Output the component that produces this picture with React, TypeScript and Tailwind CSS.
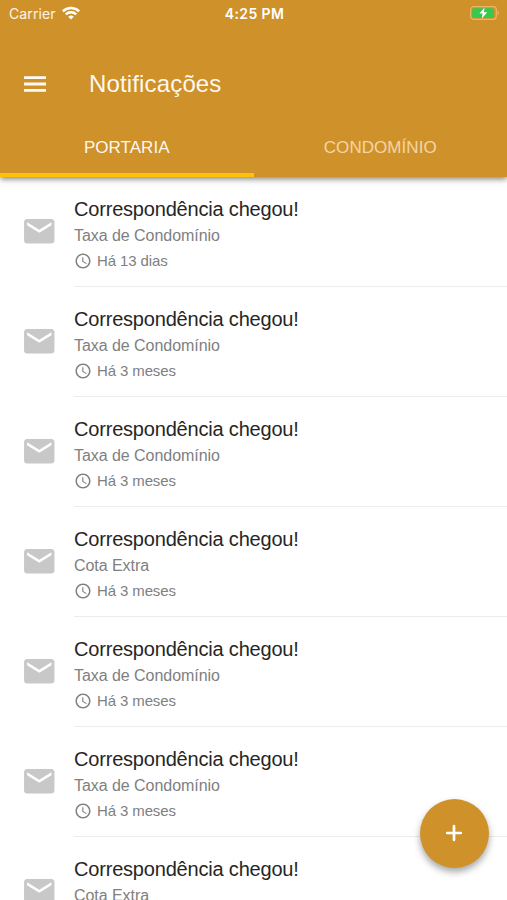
import React, { useState } from 'react';
import { MdMail, MdAccessTime } from 'react-icons/md';

interface Notification {
  id: number;
  title: string;
  description: string;
  time: string;
}

const notifications: Notification[] = [
  { id: 1, title: 'Correspondência chegou!', description: 'Taxa de Condomínio', time: 'Há 13 dias' },
  { id: 2, title: 'Correspondência chegou!', description: 'Taxa de Condomínio', time: 'Há 3 meses' },
  { id: 3, title: 'Correspondência chegou!', description: 'Taxa de Condomínio', time: 'Há 3 meses' },
  { id: 4, title: 'Correspondência chegou!', description: 'Cota Extra', time: 'Há 3 meses' },
  { id: 5, title: 'Correspondência chegou!', description: 'Taxa de Condomínio', time: 'Há 3 meses' },
  { id: 6, title: 'Correspondência chegou!', description: 'Taxa de Condomínio', time: 'Há 3 meses' },
  { id: 7, title: 'Correspondência chegou!', description: 'Cota Extra', time: 'Há 3 meses' },
];

function StatusBar() {
  return (
    <div className="grid h-7 grid-cols-3 items-center pl-[9px] pr-[7px] font-['Inter',sans-serif] text-[14px] leading-7 text-white/90">
      <div className="flex items-center gap-[6px]">
        <span className="tracking-[0.1px]">Carrier</span>
        <svg viewBox="0 0 18 14" className="mb-[2px] h-[14px] w-[18px]" fill="none" stroke="white" strokeWidth="2.5">
          <path d="M0.9 5.3a11.5 11.5 0 0 1 16.2 0" />
          <path d="M3.8 8.4a7.4 7.4 0 0 1 10.4 0" />
          <path d="M9 13.6 6.2 10.8a4 4 0 0 1 5.6 0Z" fill="white" stroke="none" />
        </svg>
      </div>
      <span className="text-center font-semibold tracking-[0.4px] text-white">4:25 PM</span>
      <svg viewBox="0 0 30 14" className="mb-[2px] h-[14px] w-[30px] justify-self-end">
        <rect x="0.7" y="0.7" width="25.6" height="12.6" rx="3" fill="none" stroke="#f0b469" strokeWidth="1.2" />
        <rect x="2.2" y="2.2" width="21.6" height="9.6" rx="1.5" fill="#35c94f" />
        <path d="M27.6 4.8c1.8.6 1.8 3.8 0 4.4Z" fill="#f0b469" />
        <path d="M14.6 1.4 9.4 7.6h3.2l-.9 5.2 5.6-6.6h-3.5Z" fill="white" />
      </svg>
    </div>
  );
}

function NotificationItem({ item }: { item: Notification }) {
  return (
    <li className="flex h-[110px] shrink-0">
      <div className="flex w-[74px] items-center pb-px pl-[20.5px]">
        <MdMail className="size-[36.5px] text-[#c8c8c8]" />
      </div>
      <div className="flex-1 border-b border-[#ececec] pt-[19px]">
        <h2 className="text-[20px] leading-[26px] tracking-[-0.19px] text-[#262626]">{item.title}</h2>
        <p className="pt-px text-[16px] leading-[26px] tracking-[-0.05px] text-[#808080]">{item.description}</p>
        <div className="flex items-center gap-[5px] text-[#808080]">
          <MdAccessTime className="size-[18px]" />
          <span className="text-[15px] leading-6 tracking-[-0.12px]">{item.time}</span>
        </div>
      </div>
    </li>
  );
}

export default function App() {
  const [tab, setTab] = useState('portaria');

  const tabClass = (name: string) =>
    tab === name
      ? 'flex-1 border-b-4 border-[#ffc107] pt-1.5 text-white/95 tracking-[0.05px]'
      : 'flex-1 border-b-4 border-transparent pt-1.5 text-[#f4d5a5] tracking-[0.05px]';

  return (
    <div className="relative flex h-[900px] w-[507px] flex-col overflow-hidden bg-white font-['Liberation_Sans',Arial,sans-serif]">
      <header className="z-10 h-[177px] shrink-0 bg-[#cf922b] shadow-[0_2px_6px_rgba(0,0,0,0.5)]">
        <StatusBar />
        <div className="flex h-[88px] items-center pl-6 pt-6">
          <button aria-label="Menu" className="mr-[43px] text-white/95">
            <svg viewBox="0 0 22 16" className="h-4 w-[22px]" fill="currentColor">
              <path d="M0 0.2h22v2.8H0zM0 6.6h22v2.8H0zM0 13h22v2.8H0z" />
            </svg>
          </button>
          <h1 className="text-2xl tracking-[0.15px] text-white/95">Notificações</h1>
        </div>
        <nav className="flex h-[61px] text-[17px]">
          <button className={tabClass('portaria')} onClick={() => setTab('portaria')}>PORTARIA</button>
          <button className={tabClass('condominio')} onClick={() => setTab('condominio')}>CONDOMÍNIO</button>
        </nav>
      </header>

      <ul className="flex flex-col">
        {notifications.map((item) => (
          <NotificationItem key={item.id} item={item} />
        ))}
      </ul>

      <button
        aria-label="Adicionar"
        className="absolute right-[18px] top-[799px] flex size-[69px] items-center justify-center rounded-full bg-[#cf922b] pb-px pr-px shadow-[0_4px_7px_rgba(0,0,0,0.35)]"
      >
        <svg viewBox="0 0 18 18" className="size-[18px]" stroke="white" strokeWidth="2.7" strokeLinecap="round">
          <path d="M9 2.2v13.6M2.2 9h13.6" />
        </svg>
      </button>
    </div>
  );
}
